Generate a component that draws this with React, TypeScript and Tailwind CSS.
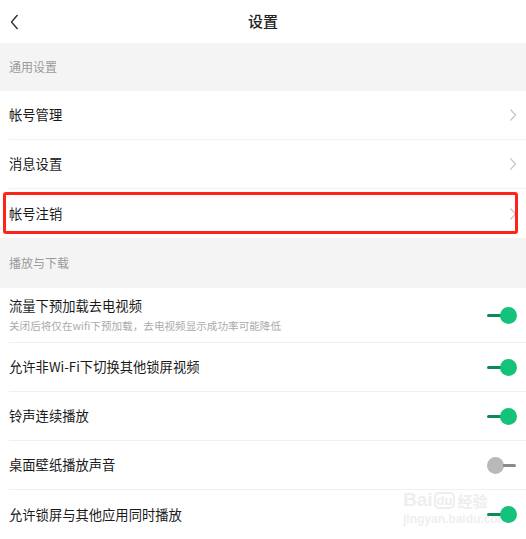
import React from 'react';

const font = { fontFamily: '"Noto Sans CJK SC", "Noto Sans", sans-serif' };

function Toggle({ on }: { on: boolean }) {
  return on ? (
    <div className="relative z-10 flex items-center w-[30px] mr-[9px]">
      <div className="h-[3px] w-[16px] bg-[#0b8a56] rounded-l-full" />
      <div className="w-[17px] h-[17px] -ml-[3px] rounded-full bg-[#14c27b]" />
    </div>
  ) : (
    <div className="relative z-10 flex items-center w-[30px] mr-[9px]">
      <div className="w-[17px] h-[17px] rounded-full bg-[#b9b9b9]" />
      <div className="h-[3px] w-[13px] -ml-[1px] bg-[#8a8a8a] rounded-r-full" />
    </div>
  );
}

function Chevron() {
  return (
    <svg width="8" height="14" viewBox="0 0 8 14" className="mr-[9px]">
      <path d="M1.5 1.5 L6.5 7 L1.5 12.5" fill="none" stroke="#c8c8c8" strokeWidth="1.3" />
    </svg>
  );
}

function SectionHeader({ title, tall }: { title: string; tall?: boolean }) {
  return (
    <div className={`${tall ? 'h-[50px]' : 'h-[48px]'} bg-[#f4f4f4] pl-[9px] flex items-center text-[12px] text-[#9a9a9a]`}>
      {title}
    </div>
  );
}

function LinkRow({ label, last, marked }: { label: string; last?: boolean; marked?: boolean }) {
  return (
    <div className="relative pl-[9px] bg-white">
      <div className={`h-[49px] flex items-center justify-between ${last ? '' : 'border-b border-[#f0f0f0]'}`}>
        <span className="text-[13.3px] text-[#1a1a1a]">{label}</span>
        <Chevron />
      </div>
      {marked && (
        <div className="absolute left-[3px] right-[8px] top-[3px] bottom-[4px] border-[3px] border-[#ff2418] rounded-[3px]" />
      )}
    </div>
  );
}

function ToggleRow({ label, sub, on, last }: { label: string; sub?: string; on: boolean; last?: boolean }) {
  return (
    <div className="pl-[9px] bg-white">
      <div
        className={`${sub ? 'h-[55px]' : 'h-[49px]'} flex items-center justify-between ${last ? '' : 'border-b border-[#f0f0f0]'}`}
      >
        <div className="flex flex-col">
          <span className="text-[13.3px] text-[#1a1a1a] leading-[18px]">{label}</span>
          {sub && <span className="text-[10.6px] text-[#ababab] leading-[14px] mt-[4px]">{sub}</span>}
        </div>
        <Toggle on={on} />
      </div>
    </div>
  );
}

export default function App() {
  return (
    <div className="relative w-[526px] h-[539px] overflow-hidden bg-white" style={font}>
      {/* Top bar */}
      <div className="h-[43px] flex items-center bg-white">
        <div className="w-[40px] pl-[10px] flex items-center">
          <svg width="9" height="16" viewBox="0 0 9 16">
            <path d="M7.5 1 L1.5 8 L7.5 15" fill="none" stroke="#333" strokeWidth="1.4" />
          </svg>
        </div>
        <div className="flex-1 text-center text-[15px] font-medium text-[#222]">设置</div>
        <div className="w-[40px]" />
      </div>

      <SectionHeader title="通用设置" />
      <LinkRow label="帐号管理" />
      <LinkRow label="消息设置" />
      <LinkRow label="帐号注销" last marked />

      <SectionHeader title="播放与下载" tall />
      <ToggleRow label="流量下预加载去电视频" sub="关闭后将仅在wifi下预加载，去电视频显示成功率可能降低" on />
      <ToggleRow label="允许非Wi-Fi下切换其他锁屏视频" on />
      <ToggleRow label="铃声连续播放" on />
      <ToggleRow label="桌面壁纸播放声音" on={false} />
      <ToggleRow label="允许锁屏与其他应用同时播放" on last />

      {/* watermark */}
      <div className="absolute left-[403px] top-[490px] flex flex-col items-start pointer-events-none select-none">
        <div className="flex items-end text-[#eeeeee] font-bold leading-none" style={{ fontFamily: '"Liberation Sans", "Noto Sans CJK SC", sans-serif' }}>
          <span className="text-[19px]">Bai</span>
          <span className="text-[13px] border-2 border-[#eeeeee] rounded-[5px] px-[1px] ml-[1px]">du</span>
          <span className="text-[15px] ml-[2px]">经验</span>
        </div>
        <span className="text-[12px] text-[#efefef] font-bold leading-[14px] mt-[3px]" style={{ fontFamily: '"Liberation Sans", sans-serif' }}>
          jingyan.baidu.com
        </span>
      </div>
    </div>
  );
}
